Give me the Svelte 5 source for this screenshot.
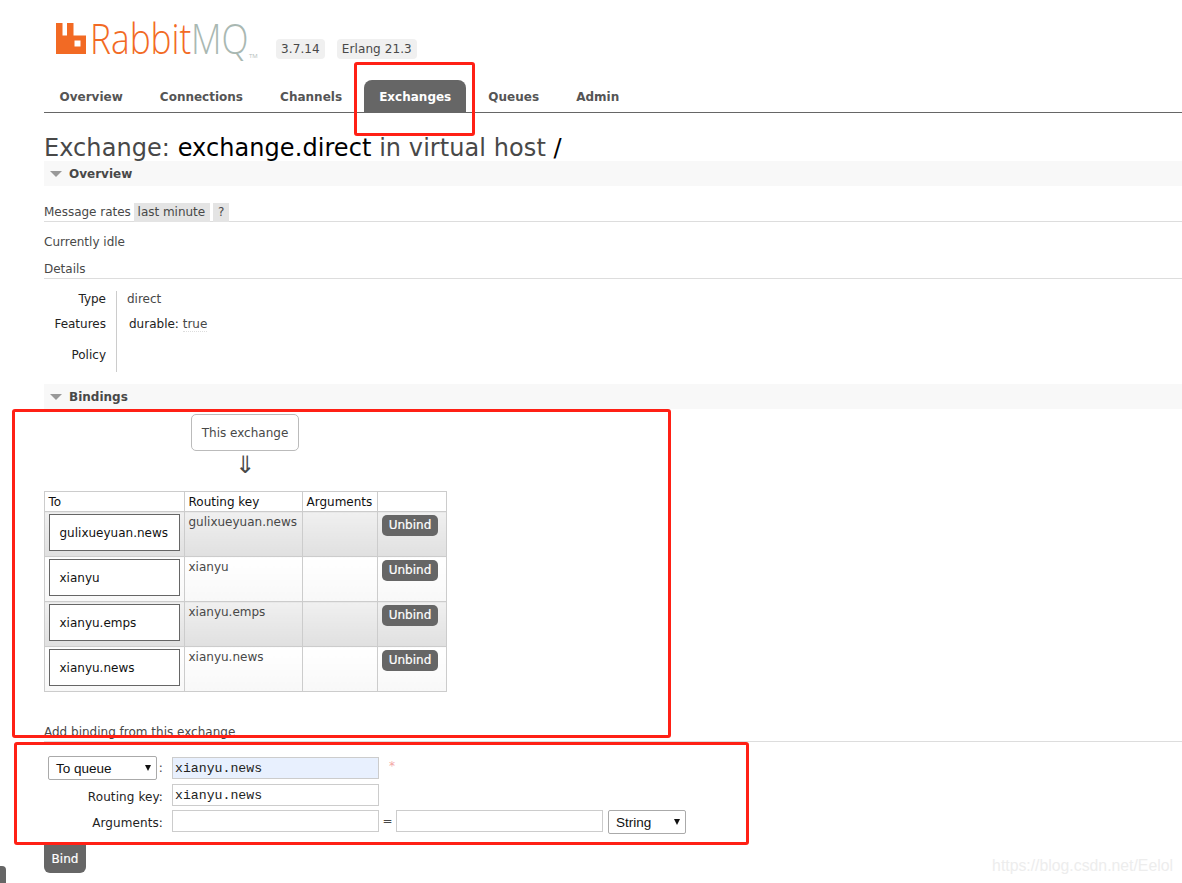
<script>
    const tabs = ['Overview', 'Connections', 'Channels', 'Exchanges', 'Queues', 'Admin']
    const bindings = ['gulixueyuan.news', 'xianyu', 'xianyu.emps', 'xianyu.news']
</script>

<div class="page">
    <header>
        <div class="logo">
            <svg width="30" height="31" viewBox="0 0 30 31">
                <path fill="#f26a24" fill-rule="evenodd" d="M0 0H6.5V12.500H11V0H17.500V12.500H30V31H0ZM18.500 17.500V23.500H24.500V17.500Z" />
            </svg>
            <span class="rabbit">Rabbit</span><span class="mq">MQ</span><span class="tm">TM</span>
        </div>
        <span class="badge first">3.7.14</span>
        <span class="badge">Erlang 21.3</span>
    </header>

    <nav>
        {#each tabs as tab}
            <span class="tab" class:active={tab === 'Exchanges'}>{tab}</span>
        {/each}
    </nav>

    <h1>Exchange: <b>exchange.direct</b> in virtual host <b>/</b></h1>

    <h2><i class="tri"></i>Overview</h2>
    <div class="rates">
        Message rates <span class="chip">last minute</span> <span class="chip q">?</span>
    </div>
    <p class="idle">Currently idle</p>
    <div class="details">Details</div>

    <div class="facts">
        <div class="labels">
            <div class="l1">Type</div>
            <div class="l2">Features</div>
            <div class="l3">Policy</div>
        </div>
        <div class="values">
            <div class="v1">direct</div>
            <div class="v2"><span class="key">durable:</span> <span class="val">true</span></div>
        </div>
    </div>

    <h2 class="bindings"><i class="tri"></i>Bindings</h2>

    <div class="this-wrap">
        <div class="this">This exchange</div>
        <div class="arrow">⇓</div>
    </div>

    <table>
        <thead>
            <tr>
                <th class="c1">To</th>
                <th class="c2">Routing key</th>
                <th class="c3">Arguments</th>
                <th class="c4"></th>
            </tr>
        </thead>
        <tbody>
            {#each bindings as name, i}
                <tr class={i % 2 ? 'even' : 'odd'}>
                    <td class="to"><div class="queue">{name}</div></td>
                    <td>{name}</td>
                    <td></td>
                    <td class="op"><span class="unbind">Unbind</span></td>
                </tr>
            {/each}
        </tbody>
    </table>

    <div class="add">Add binding from this exchange</div>

    <div class="form">
        <div class="row r1">
            <div class="lab"><div class="select sq">To queue<i class="caret"></i></div>:</div>
            <div class="input blue">xianyu.news</div>
            <span class="star">*</span>
        </div>
        <div class="row r2">
            <div class="lab">Routing key:</div>
            <div class="input">xianyu.news</div>
        </div>
        <div class="row r3">
            <div class="lab">Arguments:</div>
            <div class="input"></div>
            <span class="eq">=</span>
            <div class="input"></div>
            <div class="select st">String<i class="caret"></i></div>
        </div>
    </div>

    <div class="bind">Bind</div>
</div>

<div class="mark m1"></div>
<div class="mark m2"></div>
<div class="mark m3"></div>
<div class="stub"></div>
<div class="watermark">https://blog.csdn.net/Eelol</div>

<style>
    :global(body) {
        margin: 0;
        background: #fff;
        overflow: hidden;
    }
    .page {
        padding-left: 44px;
        height: 883px;
        box-sizing: border-box;
        font-family: "DejaVu Sans", Verdana, sans-serif;
        font-size: 12px;
        color: #484848;
        overflow: hidden;
    }
    header {
        display: flex;
        align-items: flex-start;
        height: 80px;
        padding-left: 12px;
        box-sizing: border-box;
        padding-top: 23px;
    }
    .logo {
        display: flex;
        align-items: flex-start;
        width: 220px;
        height: 32px;
        font-family: "Open Sans", sans-serif;
        font-weight: 300;
        font-size: 43px;
        line-height: 30px;
    }
    .logo svg {
        flex: none;
        margin-right: 4px;
    }
    .rabbit {
        color: #f26a24;
        transform: scaleX(0.82);
        transform-origin: left;
        width: 101px;
    }
    .mq {
        color: #a9b8b2;
        transform: scaleX(0.82);
        transform-origin: left;
        width: 58px;
    }
    .tm {
        font-size: 6px;
        font-weight: 400;
        color: #b5c0bc;
        margin-top: 18px;
    }
    .badge {
        margin-top: 16px;
        height: 20px;
        line-height: 20px;
        padding: 0 5px;
        background: #f0f0f0;
        border-radius: 4px;
        letter-spacing: 0.1px;
    }
    .first {
        margin-right: 12px;
    }
    nav {
        display: flex;
        height: 33px;
        box-sizing: border-box;
        border-bottom: 1px solid #666;
        font-weight: bold;
        font-size: 12px;
        color: #555;
    }
    .tab {
        padding: 0 15px 0 15.500px;
        margin-right: 6.600px;
        line-height: 34px;
        border-radius: 8px 8px 0 0;
    }
    .active {
        background: #666;
        color: #fff;
    }
    h1 {
        margin: 21px 0 0;
        height: 27px;
        font-size: 24px;
        line-height: 28px;
        font-weight: normal;
        color: #484848;
        letter-spacing: 0.07px;
    }
    h1 b {
        font-weight: normal;
        color: #000;
    }
    h2 {
        margin: 0;
        height: 25px;
        line-height: 24px;
        background: #f8f8f8;
        font-size: 12px;
        font-weight: bold;
        color: #484848;
        display: flex;
        align-items: center;
    }
    .tri {
        width: 0;
        height: 0;
        margin: 1px 7px 0 6px;
        border-left: 6px solid transparent;
        border-right: 6px solid transparent;
        border-top: 6px solid #999;
    }
    .rates {
        margin-top: 16px;
        height: 19px;
        line-height: 20px;
        border-bottom: 1px solid #ddd;
        letter-spacing: -0.02px;
    }
    .chip {
        display: inline-block;
        height: 19px;
        line-height: 19px;
        padding: 0 4.500px 0 4px;
        margin-left: -1px;
        background: #e4e4e4;
        color: #484848;
    }
    .q {
        padding: 0 4.500px;
        margin-left: 0;
    }
    .idle {
        margin: 10px 0 0;
        height: 20px;
        line-height: 20px;
    }
    .details {
        margin-top: 7px;
        height: 19px;
        line-height: 20px;
        border-bottom: 1px solid #ddd;
    }
    .facts {
        display: flex;
        margin-top: 12px;
        height: 81px;
    }
    .labels {
        width: 62px;
        text-align: right;
        color: #222;
        border-right: 1px solid #ccc;
        margin-right: 10px;
        padding-right: 10px;
        box-sizing: content-box;
    }
    .l1, .l2, .l3, .v1, .v2 {
        height: 16px;
        line-height: 16px;
    }
    .l2, .v2 {
        margin-top: 9px;
    }
    .l3 {
        margin-top: 15px;
    }
    .v2 {
        padding-left: 2px;
    }
    .key {
        color: #222;
    }
    .val {
        border-bottom: 1px dotted #ddd;
    }
    .bindings {
        margin-top: 12px;
    }
    .this-wrap {
        width: 255px;
        padding-left: 147px;
        box-sizing: border-box;
    }
    .this {
        width: 108px;
        height: 37px;
        line-height: 36px;
        margin-top: 5px;
        box-sizing: border-box;
        border: 1px solid #bbb;
        border-radius: 5px;
        text-align: center;
    }
    .arrow {
        width: 108px;
        height: 40px;
        text-align: center;
        font-size: 24px;
        line-height: 28px;
        color: #484848;
    }
    table {
        border-collapse: collapse;
        width: 403px;
        table-layout: fixed;
    }
    th, td {
        border: 1px solid #ccc;
        padding: 0 3.500px;
        text-align: left;
        vertical-align: top;
        font-weight: normal;
    }
    th {
        height: 19px;
        line-height: 17px;
        padding-top: 2px;
        color: #111;
        box-sizing: border-box;
    }
    .c1 {
        width: 140px;
    }
    .c2 {
        width: 118px;
    }
    .c3 {
        width: 75px;
    }
    td {
        height: 45px;
        box-sizing: border-box;
        line-height: 18px;
        padding-top: 1px;
    }
    .odd td {
        background: linear-gradient(#f0f0f0, #e0e0e0);
    }
    .even td {
        background: linear-gradient(#fff, #f8f8f8);
    }
    td.to {
        padding: 2px 4px 0;
    }
    .queue {
        width: 131px;
        height: 37px;
        line-height: 37px;
        box-sizing: border-box;
        border: 1px solid #666;
        background: #fff;
        color: #111;
        padding-left: 9.500px;
    }
    td.op {
        padding: 3px 4px 0;
    }
    .unbind {
        display: block;
        width: 56px;
        height: 21px;
        line-height: 21px;
        background: #666;
        color: #fff;
        border-radius: 5px;
        text-align: center;
        -webkit-text-stroke: 0.2px #fff;
    }
    .add {
        margin-top: 30px;
        height: 19px;
        line-height: 20px;
        border-bottom: 1px solid #ddd;
    }
    .form {
        margin-top: 15px;
        margin-left: 4px;
    }
    .row {
        display: flex;
        align-items: flex-start;
        height: 22px;
        margin-bottom: 5px;
        line-height: 22px;
    }
    .r2 {
        margin-bottom: 4px;
    }
    .lab {
        width: 120px;
        flex: none;
        display: flex;
        justify-content: flex-end;
        box-sizing: border-box;
        padding-right: 5px;
        padding-top: 2px;
        color: #222;
        margin-right: 4px;
        letter-spacing: 0.1px;
    }
    .r1 .lab {
        justify-content: flex-start;
        color: #484848;
        padding-top: 0;
    }
    .input {
        width: 207px;
        height: 22px;
        line-height: 21px;
        box-sizing: border-box;
        border: 1px solid #ccc;
        padding-left: 2px;
        font-family: "Liberation Mono", monospace;
        font-size: 13.200px;
        color: #222;
    }
    .blue {
        background: #e8f0fe;
    }
    .star {
        margin-left: 10px;
        color: #f3a5a5;
        font-size: 12px;
        line-height: 18px;
    }
    .eq {
        width: 17px;
        text-align: center;
    }
    .select {
        position: relative;
        height: 24px;
        line-height: 24px;
        box-sizing: border-box;
        border: 1px solid #aaa;
        border-radius: 2px;
        padding-left: 7px;
        color: #111;
        font-family: "Liberation Sans", sans-serif;
        font-size: 13.500px;
        letter-spacing: 0;
    }
    .sq {
        width: 110px;
        margin-top: -1px;
        margin-right: 2px;
    }
    .st {
        width: 78px;
        margin-left: 5px;
        line-height: 23px;
        padding-left: 7px;
    }
    .caret {
        position: absolute;
        right: 5px;
        top: 8px;
        border-left: 3px solid transparent;
        border-right: 3px solid transparent;
        border-top: 6px solid #111;
    }
    .bind {
        width: 42px;
        height: 28px;
        margin-top: 13px;
        line-height: 28px;
        text-align: center;
        background: #666;
        color: #fff;
        border-radius: 0 0 6px 6px;
        -webkit-text-stroke: 0.2px #fff;
    }
    .mark {
        position: absolute;
        border: 3px solid #ff2015;
        border-radius: 3px;
        box-sizing: border-box;
    }
    .m1 {
        left: 354px;
        top: 62px;
        width: 121px;
        height: 74px;
    }
    .m2 {
        left: 12px;
        top: 409px;
        width: 659px;
        height: 329px;
    }
    .m3 {
        left: 14px;
        top: 742px;
        width: 735px;
        height: 103px;
    }
    .stub {
        position: absolute;
        left: 0;
        top: 866px;
        width: 6px;
        height: 17px;
        background: #666;
        border-radius: 0 4px 0 0;
    }
    .watermark {
        position: absolute;
        right: 9px;
        top: 857px;
        font-family: "Liberation Sans", sans-serif;
        font-size: 15.800px;
        color: #ededed;
    }
</style>
